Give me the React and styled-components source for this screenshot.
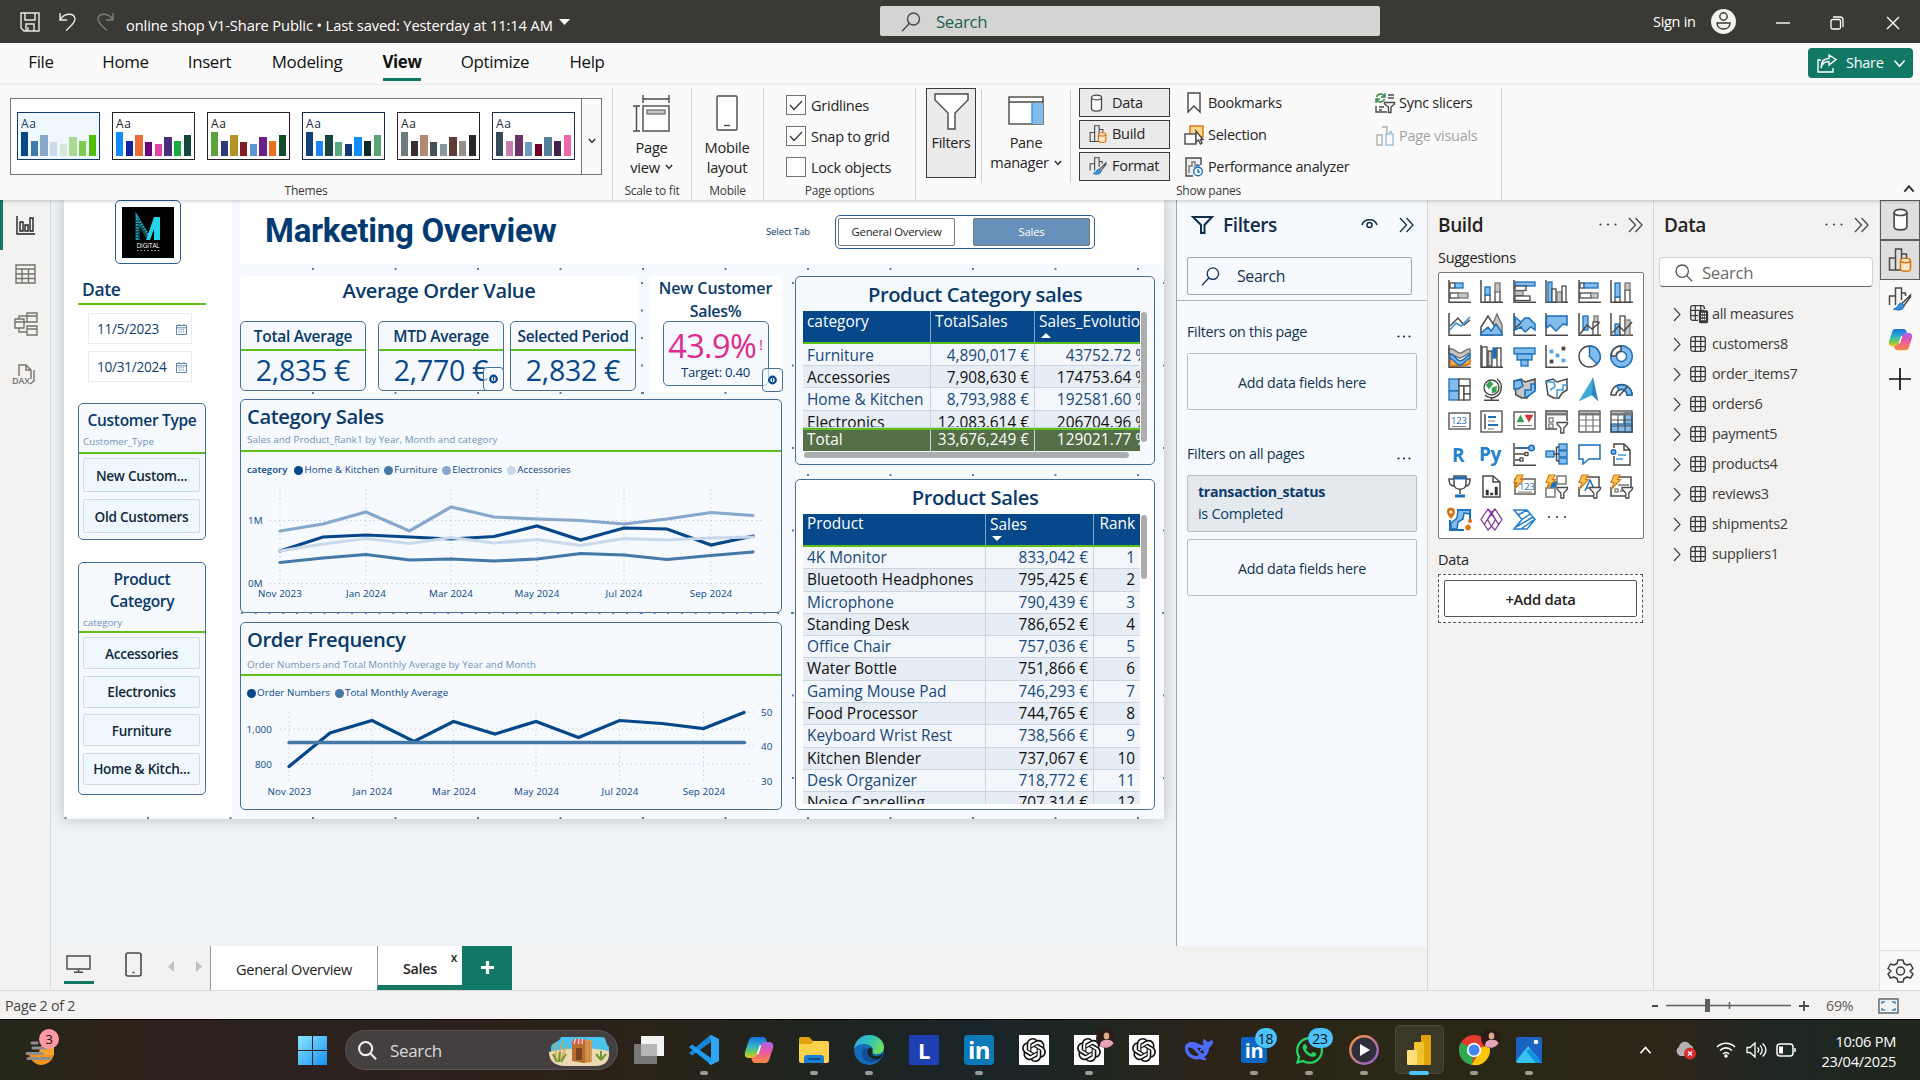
import React from 'react';
import styled, { createGlobalStyle, css } from 'styled-components';
import { SiOpenai } from 'react-icons/si';
import { FaWhatsapp } from 'react-icons/fa';

const Global = createGlobalStyle`
  *, *::before, *::after { box-sizing: border-box; letter-spacing: -0.02em; }
  body { margin: 0; overflow: hidden; font-family: "Open Sans", "Noto Sans", "Liberation Sans", sans-serif; color: #252423; }
  svg { display: block; flex: none; overflow: visible; }
`;

const NAVY = '#093a69';
const BLUE = '#07488a';
const GREEN = '#5cbf1c';
const TEAL = '#117865';
const K = '#4a4948';

const row = css`display: flex; align-items: center;`;
const col = css`display: flex; flex-direction: column;`;

const Screen = styled.div`${col} width: 1920px; height: 1080px; overflow: hidden; background: #f3f2f1;`;

const T = styled.span`
  display: block; white-space: nowrap; flex: none;
  font-size: ${p => p.$s}px; line-height: ${p => p.$lh || 20}px;
  font-weight: ${p => p.$w || 400}; color: ${p => p.$c || 'inherit'};
  ${p => p.$ls !== undefined && `letter-spacing: ${p.$ls}em;`}
`;
const Small = styled(T)`letter-spacing: 0.005em;`;
const Cell = styled.span`display: block; white-space: nowrap; font-size: 15.4px; line-height: ${p => p.$lh || 20}px; letter-spacing: 0;`;

/* ---------- title bar ---------- */
const TitleBar = styled.header`display: grid; grid-template-columns: 880px 500px 1fr; height: 43px; flex: none; background: #3b3936; color: #fff;`;
const TitleLeft = styled.div`${row} padding: 0 0 0 20px;`;
const IconSlot = styled.div`width: ${p => p.$w}px; flex: none; margin-top: ${p => p.$t || 0}px;`;
const DocName = styled.div`width: 433px; flex: none; padding-top: 6px;`;
const TopSearch = styled.div`${row} margin: 6px 0 7px; height: 30px; background: #d4d4d2; border-radius: 2px; padding: 2px 0 0 21px; gap: 15px; color: #215f4f;`;
const TitleRight = styled.div`${row} padding-left: 273px;`;

const MenuRow = styled.nav`display: flex; height: 42px; flex: none; background: #fafafa; padding: 0 7px 0 28px; justify-content: space-between;`;
const Menu = styled.div`display: flex; gap: 39px;`;
const MenuItem = styled.div`
  ${row} justify-content: center; width: ${p => p.$w}px; height: 38px; margin-right: ${p => p.$mr || 0}px; padding-top: 3px;
  border-bottom: 3px solid ${p => (p.$on ? TEAL : 'transparent')};
`;
const ShareBtn = styled.button`${row} width: 105px; height: 30px; margin-top: 5px; border: 0; border-radius: 4px; background: ${TEAL}; color: #fff; padding: 0 0 0 9px; font-family: inherit; gap: 9px;`;

/* ---------- ribbon ---------- */
const Ribbon = styled.section`display: flex; height: 115px; flex: none; background: #fafafa; position: relative; z-index: 3; box-shadow: 0 1px 4px rgba(0,0,0,.22);`;
const Group = styled.div`${col} width: ${p => p.$w}px; height: 112px; margin-top: 3px; align-items: center; border-right: 1px solid #d2d0ce;`;
const GroupBody = styled.div`height: 93px; width: 100%; flex: none; display: flex; ${p => p.$center && 'flex-direction: column; align-items: center; padding-right: 1px;'}`;
const GroupName = styled.div`font-size: 12px; line-height: 19px; white-space: nowrap; flex: none; color: #3b3a39;`;
const Gallery = styled.div`display: flex; margin: 10px 0 0 10px; width: 592px; height: 77px; border: 1px solid #777; background: #fff;`;
const Cards = styled.div`display: flex; gap: 12px; padding: 13px 0 0 6px; width: 571px;`;
const ThemeCard = styled.div`${col} width: 83px; height: 48px; border: 1px solid ${p => p.$c}; background: ${p => p.$bg || '#fff'}; padding: 2px 3px 4px;`;
const Bars = styled.div`display: flex; align-items: flex-end; gap: 2.3px; height: 24px;`;
const Bar = styled.i`width: 7.5px; background: ${p => p.$c}; height: ${p => p.$h}px;`;
const GalleryMore = styled.div`${row} justify-content: center; width: 20px; border-left: 1px solid #777; background: #fafafa; padding-top: 8px;`;
const Checks = styled.div`${col} gap: 11px; padding: 7px 0 0 22px;`;
const CheckRow = styled.div`${row} gap: 5px; height: 20px;`;
const Box = styled.div`${row} justify-content: center; width: 20px; height: 20px; border: 1px solid #767472; background: #fff;`;
const FiltersBtn = styled.div`${col} align-items: center; width: 50px; height: 90px; margin-left: 10px; padding-top: 4px; border: 1px solid #3a3a3a; background: #ebebeb; gap: 4px;`;
const Sep = styled.div`width: 1px; height: 93px; margin: 2px 0 0 ${p => p.$ml}px; background: #d2d0ce;`;
const PaneMgr = styled.div`${col} align-items: center; width: 88px; padding-top: 8px;`;
const PaneText = styled.div`${col} align-items: center; padding-top: 1px;`;
const Toggles = styled.div`${col} gap: 2.5px; margin-left: 8px; width: 91px;`;
const Toggle = styled.div`${row} height: 30px; border: 1px solid #3a3a3a; background: #ebebeb; padding-left: 9px; gap: 5px;`;
const Links = styled.div`${col} gap: 3px; margin-left: ${p => p.$ml}px; width: ${p => p.$w}px;`;
const LinkRow = styled.div`${row} height: 30px; gap: 4px; opacity: ${p => (p.$off ? 0.42 : 1)};`;
const RibbonEnd = styled.div`flex: 1; display: flex; align-items: flex-end; justify-content: flex-end; padding: 0 5px 7px 0;`;

/* ---------- workspace ---------- */
const Work = styled.main`display: flex; height: 790px; flex: none;`;
const Rail = styled.aside`${col} width: 51px; flex: none; border-right: 1px solid #dcdad8; background: #f3f2f1;`;
const RailItem = styled.div`${row} height: ${p => p.$h}px; padding-left: ${p => p.$pl}px; border-left: 3px solid ${p => (p.$on ? TEAL : 'transparent')};`;
const Middle = styled.div`${col} width: 1376px; flex: none;`;
const Upper = styled.div`display: flex; height: 746px;`;
const Canvas = styled.div`width: 1125px; background: #eff3f6; padding-left: 13px; overflow: hidden;`;

const dot = 'linear-gradient(#6d879f, #6d879f)';
const ReportPage = styled.div`
  display: flex; width: 1100px; height: 619px; box-shadow: 0 0 14px rgba(0,0,0,.22);
  background-color: #f6f9fe;
  background-image: ${Array.from({ length: 14 }, () => dot).join(', ')};
  background-image: radial-gradient(circle at 1px 1px, #5f7d97 .9px, transparent 1.1px), radial-gradient(circle at 1px 1px, #5f7d97 .9px, transparent 1.1px),
    radial-gradient(circle at 1px 1px, #5f7d97 .9px, transparent 1.1px), radial-gradient(circle at 1px 1px, #5f7d97 .9px, transparent 1.1px),
    radial-gradient(circle at 1px 1px, #5f7d97 .9px, transparent 1.1px), radial-gradient(circle at 1px 1px, #5f7d97 .9px, transparent 1.1px),
    radial-gradient(circle at 1px 1px, #5f7d97 .9px, transparent 1.1px), radial-gradient(circle at 1px 1px, #5f7d97 .9px, transparent 1.1px);
  background-size: 82.5px 2px, 82.5px 2px, 82.5px 2px, 13.75px 2px, 82.5px 2px, 2px 27.5px, 2px 82.5px, 2px 82.5px;
  background-position: 83px 68px, 83px 192px, 83px 274px, 177px 412px, 83px 617px, 577px 82px, 728px 82px, 1099px 82px;
  background-repeat: repeat-x, repeat-x, repeat-x, repeat-x, repeat-x, repeat-y, repeat-y, repeat-y;
`;
const SideCol = styled.div`${col} width: 168px; height: 617px; background: #fff; padding-left: 14px; flex: none;`;
const Logo = styled.div`width: 66px; height: 64px; margin-left: 37px; border: 1px solid #2b5f96; border-radius: 5px; padding: 6px; background: #fff;`;
const SliceTitle = styled.div`height: 41px; width: 128px; padding: 14px 0 0 4px; border-bottom: 2px solid ${GREEN};`;
const DateBox = styled.div`${row} justify-content: space-between; width: 104px; height: 31px; margin: ${p => p.$mt}px 0 0 10px; border: 1px solid #ebebeb; padding: 1px 4px 0 8px;`;
const Panel = styled.section`
  ${col} width: ${p => p.$w}px; height: ${p => p.$h}px; margin-top: ${p => p.$mt || 0}px; flex: none;
  border: 1px solid #46719f; border-radius: 5px; background: ${p => p.$bg || '#f6f9fe'}; overflow: hidden;
`;
const PanelHead = styled.div`${col} height: ${p => p.$h}px; flex: none; border-bottom: 2px solid ${GREEN}; padding: ${p => p.$p}; align-items: ${p => (p.$center ? 'center' : 'flex-start')};`;
const Sub = styled.div`align-self: flex-start; margin: ${p => p.$m};`;
const Choices = styled.div`${col} gap: ${p => p.$gap}px; padding: ${p => p.$pt}px 6px 0 4px;`;
const Choice = styled.div`${row} justify-content: center; height: ${p => p.$h}px; width: 117px; border: 1px solid #d3dade; border-radius: 2px; background: #f0f8ff; color: #12283a; padding-top: 1px;`;

const Board = styled.div`${col} width: 924px; margin-left: 8px;`;
const Header = styled.div`display: flex; height: 64px; background: #fff; border-radius: 0 0 5px 5px; padding-left: 25px;`;
const TitleText = styled.h1`margin: 0; font-family: Roboto, sans-serif; font-weight: 700; font-size: 33px; line-height: 40px; color: #003a70; white-space: nowrap; letter-spacing: -0.008em;`;
const TabBox = styled.div`display: flex; justify-content: space-between; width: 260px; height: 34px; margin: 15px 0 0 28px; border: 1px solid #2b5f96; border-radius: 5px; padding: 2px 4px 2px 2px;`;
const TabBtn = styled.div`${row} justify-content: center; width: 117px; border: 1px solid #777; border-radius: 2px; background: ${p => (p.$on ? '#6790ba' : '#fff')}; color: ${p => (p.$on ? '#fff' : '#252423')};`;
const BoardCols = styled.div`display: flex; gap: 13px; margin-top: 12px;`;
const LeftCol = styled.div`${col} width: 542px;`;
const KpiRow = styled.div`display: flex; gap: 11px; height: 116px;`;
const KpiArea = styled.div`${col} width: ${p => p.$w}px; background: #fff; align-items: center; border-radius: 4px;`;
const KpiCards = styled.div`display: flex; width: 398px; margin-top: 16px;`;
const KpiCard = styled.div`
  ${col} position: relative; align-items: center; width: 126px; height: 70px; margin-right: ${p => p.$mr || 0}px; flex: none;
  border: 1px solid #46719f; border-radius: 5px; background: #f6f9fe;
`;
const KpiName = styled.div`${row} justify-content: center; width: 100%; height: 29px; border-bottom: 2px solid ${GREEN};`;
const NewCard = styled.div`${col} position: relative; align-items: center; width: 106px; height: 65px; border: 1px solid #46719f; border-radius: 5px; background: #f6f9fe;`;
const NewValue = styled.div`display: flex; gap: 3px; padding-top: 5px;`;
const TargetText = styled.span`font-size: 13.2px; line-height: 14px; color: ${NAVY}; white-space: nowrap;`;
const Badge = styled.div`${row} justify-content: center; position: absolute; right: ${p => p.$r}px; bottom: ${p => p.$b}px; width: 21px; height: 24px; border: 1px solid #46719f; border-radius: 4px; background: rgba(246,249,254,.6);`;
const Legend = styled.div`${row} height: 20px; margin: ${p => p.$mt}px 0 0 6px; color: ${BLUE};`;
const Dot = styled.i`width: 9px; height: 9px; border-radius: 50%; background: ${p => p.$c}; margin: 0 1px 0 ${p => p.$ml || 0}px; flex: none;`;

const RightCol = styled.div`${col} width: 360px;`;
const PanelTitle = styled.div`${row} justify-content: center; height: 34px; flex: none;`;
const TableWrap = styled.div`display: flex; gap: 1px; padding-left: 7px; overflow: hidden; height: ${p => p.$h}px; flex: none;`;
const Table = styled.div`width: 337px; overflow: hidden; flex: none;`;
const Tr = styled.div`
  display: grid; grid-template-columns: ${p => p.$cols}; height: ${p => p.$h || 22.3}px; overflow: hidden;
  color: ${p => (p.$alt ? '#111' : '#17497c')}; background: ${p => (p.$alt ? '#e6edf4' : '#f3f6fa')};
  border-bottom: 1px solid #c9d5e0;
  ${p => p.$kind === 'head' && `background: ${BLUE}; color: #fff; border-bottom: 2px solid ${GREEN};`}
  ${p => p.$kind === 'total' && `background: #556e47; color: #fff; border: 0; border-top: 2px solid ${GREEN};`}
`;
const Td = styled.div`
  display: flex; flex-direction: column; overflow: hidden; padding: ${p => p.$pt || 0}px 5px 0 4px; align-items: ${p => (p.$right ? 'flex-end' : 'flex-start')};
  border-right: 1px solid ${p => (p.$head ? '#7fa3c6' : '#c9d5e0')};
  &:last-child { border-right: 0; }
`;
const SortMark = styled.i`margin: 1px 0 0 2px; border: 5px solid transparent; ${p => (p.$up ? 'border-bottom-color: #fff; border-top: 0;' : 'border-top-color: #fff; border-bottom: 0;')}`;
const VScroll = styled.i`width: 6px; height: ${p => p.$h}px; border-radius: 3px; background: #adadad; margin-top: 1px;`;
const HScroll = styled.i`width: 325px; height: 6px; border-radius: 3px; background: #adadad; margin: 1px 0 0 8px; flex: none;`;

/* ---------- filters pane ---------- */
const Filters = styled.aside`${col} width: 251px; background: #f6f9fe; border-left: 1px solid #a5a5a5; color: #12344f;`;
const FHead = styled.div`${row} height: 49px; padding-left: 15px; color: #102f4c;`;
const FSearch = styled.div`${row} width: 225px; height: 38px; margin: 8px 0 0 10px; border: 1px solid #a6a6a6; border-radius: 2px; padding-left: 13px; gap: 17px;`;
const FLine = styled.div`height: 1px; background: #b0b0b0; margin-top: 5px;`;
const FLabel = styled.div`display: flex; justify-content: space-between; padding: 0 16px 0 10px; margin-top: ${p => p.$mt}px;`;
const FBox = styled.div`${row} justify-content: center; width: 230px; height: 57px; margin: ${p => p.$mt}px 0 0 10px; border: 1px solid #bcbfc2; border-radius: 2px; padding-top: 2px;`;
const FCard = styled.div`${col} width: 230px; height: 57px; margin: 11px 0 0 10px; border: 1px solid #bcbfc2; border-radius: 2px; background: #e5e8ec; padding: 6px 0 0 10px; gap: 2px; color: #0a3d6d;`;

/* ---------- build and data panes ---------- */
const Pane = styled.aside`${col} width: 226px; flex: none; border-left: 1px solid #d8d6d4; background: #f3f2f1;`;
const PHead = styled.div`${row} height: 49px; padding: 0 10px; gap: 11px;`;
const Grow = styled.div`flex: 1;`;
const PLabel = styled.div`padding-left: 10px; margin-top: ${p => p.$mt}px;`;
const VizBox = styled.div`
  display: grid; grid-template-columns: repeat(6, 32.45px); grid-auto-rows: 32.5px; align-content: start; width: 206px; height: 267px; margin: 4px 0 0 10px;
  padding: 7px 0 0 9px; border: 1px solid #7a7876; border-radius: 2px; background: #fff;
`;
const DropZone = styled.div`width: 205px; height: 49px; margin: 4px 0 0 10px; padding: 5px; border: 1px dashed #555;  background: #fff;`;
const AddData = styled.div`${row} justify-content: center; height: 37px; border: 1px solid #555; border-radius: 2px;`;
const DSearch = styled.div`${row} width: 214px; height: 30px; margin: 8px 0 12px 5px; padding: 2px 0 0 15px; gap: 9px; border: 1px solid #d1d1d1; border-bottom-color: #616161; border-radius: 4px; background: #fff; color: #6b6a69;`;
const DRow = styled.div`${row} height: 30px; padding-left: 19px;`;
const Strip = styled.aside`${col} width: 41px; background: #faf9f8; border-left: 1px solid #e1dfdd; justify-content: space-between; flex: none;`;
const StripTop = styled.div`${col}`;
const StripBtn = styled.div`${row} justify-content: center; height: 39.8px; ${p => p.$on && 'border: 1px solid #605e5c; background: #e1dfdd;'}`;
const StripGear = styled.div`${row} justify-content: center; height: 40px; border-top: 1px solid #e1dfdd;`;

/* ---------- page tabs, status ---------- */
const PageTabs = styled.div`display: flex; height: 44px;`;
const ViewModes = styled.div`display: flex; width: 159px; padding-left: 13px;`;
const ModeOn = styled.div`${col} align-items: center; width: 30px; height: 38px; border-bottom: 3px solid ${TEAL}; padding: 9px 2px 0 0;`;
const ModeOff = styled.div`width: 17px; margin: 6px 26px 0 31px;`;
const Arrows = styled.div`display: flex; gap: 22px; padding-top: 15px;`;
const PTab = styled.div`display: flex; justify-content: center; width: ${p => p.$w}px; padding-top: 13px; background: #fff; border-left: 1px solid #999; border-bottom: ${p => (p.$on ? `5px solid ${TEAL}` : 0)}; position: relative;`;
const CloseX = styled.span`position: absolute; right: 5px; top: 3px; font-size: 12px; font-weight: 600; line-height: 18px;`;
const AddPage = styled.div`${row} justify-content: center; width: 50px; background: ${TEAL}; padding-bottom: 2px;`;
const Status = styled.footer`${row} height: 29px; flex: none; border-top: 1px solid #dcdad8; padding: 2px 21px 0 5px; color: #484644;`;
const ZoomBar = styled.div`${row} gap: 8px; color: #605e5c; padding-bottom: 1px;`;
const Percent = styled.div`width: 53px; padding-left: 9px; flex: none;`;

/* ---------- taskbar ---------- */
const Taskbar = styled.footer`
  display: flex; height: 61px; flex: none; border-top: 1px solid #000; color: #fff;
  background: linear-gradient(90deg, #24281b 0, #2f221a 6%, #2b211f 14%, #2c2119 26%, #292318 34%, #1e2420 43%, #1a2529 51%, #1e2623 56%, #2c2318 63%, #2a2716 70%, #2a2716 80%, #2e2519 87%, #1d2724 93%, #20261b 100%);
`;
const Weather = styled.div`width: 298px; padding: 9px 0 0 26px;`;
const Start = styled.div`width: 47px; padding-top: 16px;`;
const TSearch = styled.div`${row} width: 273px; height: 40px; margin: 10px 3.5px 0 0; padding: 1px 7px 0 12px; gap: 13px; border: 1px solid #5c5450; border-radius: 20px; background: #454040; color: #dadada;`;
const Slot = styled.div`${col} align-items: center; position: relative; width: 55px; height: 60px; padding-top: 15px;`;
const Active = styled.div`position: absolute; left: 3px; top: 5px; width: 49px; height: 49px; border: 1px solid #4b4836; border-radius: 5px; background: #3b3827; z-index: 0;`;
const Front = styled.div`position: relative;`;
const Ind = styled.i`position: absolute; bottom: 5px; height: 4px; border-radius: 2px; width: ${p => (p.$on ? 20 : 8)}px; background: ${p => (p.$on ? '#4cc2ff' : '#9d9b95')};`;
const Count = styled.span`${row} justify-content: center; position: absolute; top: 8px; left: ${p => p.$l}px; width: ${p => p.$w}px; height: 20px; border-radius: 10px; background: #4cc2ff; color: #111; font-size: 14px;`;
const AvatarSpot = styled.div`position: absolute; top: 9px; left: 34px;`;
const WhiteTile = styled.div`${row} justify-content: center; width: 30px; height: 30px; background: #fff; color: #111;`;
const LetterTile = styled.div`${row} justify-content: center; width: 30px; height: 30px; background: ${p => p.$bg}; border-radius: ${p => p.$r || 0}px; color: #fff;`;
const LetterSmall = styled.div`${row} justify-content: center; width: 26px; height: 26px; background: #0a66c2; border-radius: 2px; color: #fff; font-size: 20px; font-weight: 700;`;
const Tray = styled.div`${row} flex: 1; justify-content: flex-end; padding-right: 24px;`;
const Clock = styled.div`${col} align-items: flex-end; margin-left: 26px; width: 74px; padding-top: 1px;`;

/* ---------- svg helpers ---------- */
const S = ({ w = 23, h = 23, vb, s = K, sw = 1.4, f = 'none', children }) => (
  <svg width={w} height={h} viewBox={vb || `0 0 ${w} ${h}`} stroke={s} strokeWidth={sw} fill={f}>{children}</svg>
);
const B = '#1a6fb8';
const BF = '#83bbec';
const GF = '#c8c6c4';
const GS = '#7a7876';
const R = (x, y, w, h, s = K, f = '#fff', sw = 1.3) => <rect key={`${x}-${y}-${w}`} x={x} y={y} width={w} height={h} stroke={s} fill={f} strokeWidth={sw} />;
const Axis = () => <path d="M1 0V22.3H23" strokeWidth="1.5" />;
const P = (d, s = K, f = 'none', sw = 1.5) => <path key={d} d={d} stroke={s} fill={f} strokeWidth={sw} />;
const Bolt = () => <path d="M4 0H10L7.5 4.5H10.5L1.5 14L4 7.5H1Z" fill="#ffc35a" stroke="#d87a10" strokeWidth="1.2" />;
const Funnel = () => <path d="M12 12.5H22.5V14L18.8 18V23H15.8V18L12 14Z" fill="#fff" stroke={K} strokeWidth="1.3" />;
const Num = ({ x, y, s }) => <text x={x} y={y} fontSize={s} fill={B} stroke="none" letterSpacing="0">123</text>;

const viz = [
  <><Axis />{R(2, 3, 5, 5)}{R(7, 3, 8, 5, B, BF)}{R(2, 13, 9, 5)}{R(10, 13, 10, 5, GS, GF)}</>,
  <><Axis />{R(5, 15, 5, 7)}{R(5, 7, 5, 8, B, BF)}{R(15, 11, 5, 11)}{R(15, 3, 5, 9, GS, GF)}</>,
  <><Axis />{R(2, 2, 20, 4, B, BF)}{R(2, 6, 11, 4.5)}{R(2, 11, 8, 4.5, GS, GF)}{R(2, 16, 15, 4.5)}</>,
  <><Axis />{R(3, 2, 4, 20, B, BF)}{R(7, 9, 4, 13)}{R(12, 12, 5, 10, GS, GF)}{R(17, 6, 4, 16)}</>,
  <><Axis />{R(2, 3, 4, 5)}{R(6, 3, 14, 5, B, BF)}{R(2, 13, 11, 5)}{R(13, 13, 7, 5, GS, GF)}</>,
  <><Axis />{R(5, 17, 5, 5)}{R(5, 3, 5, 14, B, BF)}{R(15, 10, 5, 12)}{R(15, 3, 5, 7, GS, GF)}</>,
  <><Axis />{P('M2 13L10 5L16 12L22 7')}{P('M2 17L8 10L13 13L22 4', '#2f95dc')}</>,
  <>{P('M8 22L17 1L22 12V22Z', GS, GF)}{P('M1 14L8 3L16 15L12 22H1Z', K, '#fff')}{P('M1 22V20L8 14L11 18L16 11L22 20V22Z', B, BF)}</>,
  <><Axis />{P('M2 4L8 9L12 5H16L22 11V17L18 14L12 19L8 14L2 17Z', B, BF)}{P('M2 15L8 10')}</>,
  <><Axis />{P('M1.5 3H22V12L18 11L11 18L5 12L1.5 15Z', B, BF)}</>,
  <><Axis />{R(5, 3, 5, 14, B, BF)}{R(16, 3, 4, 6, GS, GF)}{R(15, 9, 5, 13)}{P('M2 21L9 12L14 16L22 9')}</>,
  <><Axis />{R(5, 11, 5, 11, B, BF)}{R(10, 3, 5, 19)}{R(15, 7, 5, 15, GS, GF)}{P('M2 20L9 13L14 18L22 9')}</>,
  <>{P('M2 20V14C8 12 8 16 12 16S17 11 22 12V19C18 21 8 21 2 21', '#d8720c', '#f7a94e')}{P('M1 4C6 2 8 8 12 8S18 3 22 4V8C18 8 16 13 12 13S5 8 1 9Z', GS, GF)}{P('M2 9C7 9 8 16 12 16S18 11 22 9V13C18 14 16 20 12 20S6 14 2 13Z', B, BF)}<Axis /></>,
  <><Axis />{R(2, 2, 5, 20)}{R(8, 6, 4, 15, K, GF)}{R(13, 3, 3, 10, B, B)}{R(17, 3, 4, 19)}</>,
  <>{R(1, 3, 21, 6, B, BF)}{R(4, 9, 15, 6, B, BF)}{R(8, 15, 7, 6, B, BF)}</>,
  <><Axis />{[[5, 5, '#5ba6e0'], [17, 2, K], [11, 9, '#5ba6e0'], [17, 14, '#5ba6e0'], [5, 15, K]].map(([x, y, c]) => R(x, y, 3, 3, c, c, 0.8))}</>,
  <><circle cx="11.5" cy="11.5" r="10.5" fill="#fff" />{P('M11.5 11.5V1A10.5 10.5 0 0 1 19 19Z', B, BF)}</>,
  <><circle cx="11.5" cy="11.5" r="8" stroke={BF} strokeWidth="6" /><circle cx="11.5" cy="11.5" r="10.8" stroke={B} /><circle cx="11.5" cy="11.5" r="5" stroke={B} fill="#fff" />{P('M11 1A10.5 10.5 0 0 0 1 11H6A5 5 0 0 1 11 6Z', K, '#fff')}</>,
  <>{R(1, 1, 10, 12, B, BF)}{R(1, 13, 10, 9, B, BF)}{R(11, 1, 11, 7)}{R(11, 8, 5, 14)}{R(16, 8, 6, 8)}{R(16, 16, 6, 6)}</>,
  <><circle cx="11.5" cy="9.5" r="7.5" fill="#fff" />{P('M6 7L10 3L13 6L9 11ZM12 10L17 8L16 14L12 15Z', '#36a14b', '#36a14b', 0.5)}{P('M17 1A10.5 10.5 0 0 1 14 19.5C11 20.5 7 19 5 17')}{P('M11.5 20V22.3M4 22.3H19')}</>,
  <>{P('M1 3L8 1L12 4L22 1V12L17 15L14 20H9L3 17Z', K, GF)}{P('M1 3L8 2L10 8L5 11H1ZM12 12H18V6H22V13L14 19H12Z', B, BF)}</>,
  <>{P('M1 3L8 1L12 4L22 1V12L17 15L14 20H9L3 17Z', K, '#fff')}{P('M1 4H9L10 9L5 12M12 19V12H18V7H22', '#3a9be0')}</>,
  <>{P('M15 0L1 23L14 17Z', '#2f9ed0', '#3fa9d6', 0.3)}{P('M15 0L14 17L20 23Z', '#1672ae', '#2386bb', 0.3)}</>,
  <>{P('M1 17A10.5 10.5 0 0 1 22 17H17A5.5 5.5 0 0 0 6 17Z', K, '#fff')}{P('M7 8A10.5 10.5 0 0 1 22 17H17A5.5 5.5 0 0 0 9 12Z', B, BF)}{P('M9 18L17 9')}</>,
  <>{R(1, 3, 21, 16, K)}<Num x={3} y={14} s={9.5} />{P('M4 16.5H18', GS, 'none', 1)}</>,
  <>{R(1, 1, 21, 21)}{P('M5 4V19')}{P('M8 7H16M8 15H18', B, 'none', 2)}{P('M8 11H15M8 19H14', GS, 'none', 1)}</>,
  <>{R(1, 2, 21, 17)}{P('M4 12L7.5 5L11 12Z', '#3b9a55', '#3b9a55', 0.5)}{P('M12 5H20L16 12Z', '#d13438', '#d13438', 0.5)}{P('M4 15.5H19', GS, 'none', 1)}</>,
  <>{P('M12 19H1V1H22V11')}{P('M1 4H22', GS, 'none', 3)}{R(4, 8, 4, 4, GS)}{R(4, 14, 4, 4, GS)}<Funnel /></>,
  <>{R(1, 1, 21, 21)}{P('M1 4H22', GS, 'none', 3)}{P('M1 10H22M1 16H22M8 5V22M15 5V22', GS, 'none', 1.2)}</>,
  <>{R(14, 3, 8, 19, B, BF)}{R(1, 14, 21, 8, B, BF)}{R(1, 1, 21, 21, K, 'none')}{P('M1 4H22', GS, 'none', 3)}{P('M1 10H22M1 16H22M8 5V22M15 5V22', K, 'none', 1)}</>,
  <text x="4" y="18.5" fontSize="19" fontWeight="700" fill="#2283cc" stroke="none">R</text>,
  <text x="-1" y="17.5" fontSize="19" fontWeight="700" fill="#2283cc" stroke="none">Py</text>,
  <><Axis />{P('M2 5H15M2 11H12M2 17H7')}{P('M4 5H17', B)}<circle cx="18.5" cy="5" r="2.8" fill={BF} stroke={B} />{R(12, 9.5, 3, 3)}{R(7, 15, 3, 3)}</>,
  <>{R(1, 8, 8, 6, B, BF)}{R(14, 1, 8, 6, B, BF)}{R(14, 8, 8, 6, B, BF)}{R(14, 15, 8, 6, B, BF)}{P('M9 11H14M11.5 4V18M11.5 4H14M11.5 18H14')}</>,
  <>{P('M1 2H22V16H11L5 21V16H1Z', B, '#fff')}</>,
  <>{P('M4 5V1H14L20 7V22H4V13', K)}{P('M14 1V7H20')}<circle cx="3.5" cy="9" r="2.3" fill={BF} stroke={B} />{P('M8 12H16M6 16H13', '#3a9be0')}</>,
  <>{P('M6 1H18V9C18 16 6 16 6 9ZM6 4H1C1 9 3 11 6 11M18 4H22C22 9 21 11 18 11M12 14V19')}{P('M6 3H18M7 21H17', B, 'none', 3)}</>,
  <>{P('M3 1H13L20 7V22H3Z')}{P('M13 1V7H20')}{[[6, 15, 5], [10.5, 18, 2], [15, 12, 8]].map(([x, y, h]) => R(x, y, 2.4, h, '#333', '#333', 0.5))}</>,
  <>{R(2, 4, 20, 15)}<Num x={6} y={15} s={9.5} />{P('M5 17H19', GS, 'none', 1)}<Bolt /></>,
  <>{P('M12 1H21V9H12Z', GS)}{P('M1 13H10V22H1Z', GS)}{R(6, 7, 5, 5, B, B)}<Funnel /><Bolt /></>,
  <>{P('M8 2H21V12M1 12V21H15')}{P('M7 16L12 5L16 14M9 13H14', B)}<Funnel /><Bolt /></>,
  <>{P('M8 2H21V12M1 12V21H15')}{P('M8 10H19M10 16H13', GS)}{R(5, 14, 3, 3, GS)}<Funnel /><Bolt /></>,
  <>{P('M9 2H22V13M2 12V22H16', B, 'none', 2)}{P('M9 21L10 14L15 11L16 5L22 6V2H10L9 10L3 15V21Z', B, BF)}<path d="M-1 3.5A4 4 0 0 1 7 3.5C7 7 3 11 3 11S-1 7 -1 3.5Z" fill="#d8720c" stroke="none" /><circle cx="3" cy="4" r="1.5" fill="#fff" stroke="none" /><circle cx="20" cy="19.5" r="3.2" fill="#d8720c" stroke="#fff" strokeWidth=".8" /><circle cx="22" cy="13" r="2" fill="#d8720c" stroke="none" /></>,
  <>{P('M8 1L1 11.5L8 22L11.5 18.5L15 22L22 11.5L15 1L11.5 4.500ZM8 1L15.500 11.500L11.500 18.500M15 1L7.500 11.500L11.500 18.500M11.500 4.500L4.500 16.500M11.500 4.500L18.500 16.500', '#8a3a9e', 'none', 1.3)}</>,
  <>{P('M1 2H14L22 11.5L14 21H1L9 11.5ZM5 7L14 2M9 11.5L17 6M3 19L20 9M8 21L22 11', '#2080d0')}</>,
  <><circle cx="4" cy="9" r="1" fill="#333" stroke="none" /><circle cx="12" cy="9" r="1" fill="#333" stroke="none" /><circle cx="20" cy="9" r="1" fill="#333" stroke="none" /></>,
];

const Chevron = ({ w = 9, c = '#333', sw = 1.7, dir = 'down' }) => {
  const d = { down: 'M1 1L4.5 5L8 1', up: 'M1 5L4.5 1L8 5' }[dir];
  return <svg width={w} height={w * 0.67} viewBox="0 0 9 6" stroke={c} strokeWidth={sw} fill="none"><path d={d} /></svg>;
};
const DoubleChevron = ({ s = K }) => <S w={15} h={16} s={s} sw={1.3}><path d="M1 1L7.5 8L1 15M7.5 1L14 8L7.5 15" /></S>;
const Dots = ({ w = 18, c = '#444' }) => <svg width={w} height="3" viewBox={`0 0 ${w} 3`} fill={c}><circle cx="1.5" cy="1.5" r="1.1" /><circle cx={w / 2} cy="1.5" r="1.1" /><circle cx={w - 1.5} cy="1.5" r="1.1" /></svg>;
const Glass = ({ s = K, z = 20 }) => <svg width={z} height={z} viewBox="0 0 20 20" stroke={s} strokeWidth="1.4" fill="none"><circle cx="12.5" cy="7" r="6" /><path d="M8.2 11.6L1 19.3" /></svg>;
const GlassR = ({ s = K, z = 18, sw = 1.4 }) => <svg width={z} height={z} viewBox="0 0 18 18" stroke={s} strokeWidth={sw} fill="none"><circle cx="7.2" cy="7.2" r="6.2" /><path d="M11.6 11.6L17.2 17.2" /></svg>;
const Cyl = ({ w = 12, h = 18, s = K, f = '#fff', sw = 1.3 }) => <svg width={w} height={h} viewBox="0 0 12 18" stroke={s} strokeWidth={sw} fill={f}><path d="M1 3.5V14.5C1 18 11 18 11 14.5V3.5" /><ellipse cx="6" cy="3.5" rx="5" ry="2.4" /></svg>;
const BuildIcon = ({ z = 20 }) => <svg width={z} height={z} viewBox="0 0 23 24" stroke={K} strokeWidth="1.5" fill="#fff"><path d="M1 10H7V22H1ZM7 1H13V22H7ZM13 6H18V10" fill="none" /><path d="M12 13V21C12 24 22 24 22 21V13" fill="#fde7cf" stroke="#d8720c" /><ellipse cx="17" cy="12.5" rx="5" ry="2.2" fill="#fde7cf" stroke="#d8720c" /></svg>;
const FormatIcon = ({ z = 20 }) => <svg width={z} height={z} viewBox="0 0 23 24" stroke={K} strokeWidth="1.5" fill="none"><path d="M1 18V9H7V18M7 14V1H13V13M13 6H17V9" /><path d="M22 8L13 17L15 19L22 10Z" fill="#fff" /><path d="M13 16C9 16 10 21 5 22C10 24 16 23 15.5 18.5Z" fill="#3d8fd6" stroke={B} strokeWidth="1" /></svg>;
const Copilot = ({ z = 24, id }) => (
  <svg width={z} height={z * 0.93} viewBox="0 0 28 26">
    <defs>
      <linearGradient id={`${id}a`} x1="0" y1="0" x2="0" y2="1"><stop offset="0" stopColor="#1b6fe0" /><stop offset=".45" stopColor="#2fb5c8" /><stop offset=".75" stopColor="#7ccb4a" /><stop offset="1" stopColor="#f5c518" /></linearGradient>
      <linearGradient id={`${id}b`} x1="0" y1="0" x2="0" y2="1"><stop offset="0" stopColor="#a55ff0" /><stop offset=".5" stopColor="#ee5a9b" /><stop offset="1" stopColor="#fb8b3c" /></linearGradient>
    </defs>
    <path d="M8 0H18C20 0 21 2 21.5 4L22 6C19 5 17 6 16 9L13 17C12 20 10 21 7 21H4C0 21 -1 18 .3 14L3.6 4C4.4 1.5 5.6 0 8 0Z" fill={`url(#${id}a)`} />
    <path d="M20 26H10C8 26 7 24 6.5 22L6 20C9 21 11 20 12 17L15 9C16 6 18 5 21 5H24C28 5 29 8 27.7 12L24.4 22C23.6 24.5 22.4 26 20 26Z" fill={`url(#${id}b)`} />
    <path d="M15.500 8.500L12.500 17.500" stroke="#fff" strokeWidth="1.600" />
  </svg>
);
const Cal = () => <S w={11} h={11} s="#5c86ad" sw={1}><path d="M.5 1.5H10.5V10.5H.5ZM.5 3.8H10.5M3 0V2M8 0V2" /><path d="M2.5 5.8H8.5M2.5 8H8.5" strokeDasharray="1.2 1" /></S>;
const InfoMark = () => <svg width="9" height="10" viewBox="0 0 9 10"><circle cx="4.5" cy="5" r="3.3" fill="none" stroke={BLUE} strokeWidth="2.2" /><path d="M4.5 3V6.5" stroke={BLUE} strokeWidth="1.2" /></svg>;
const GridIcon = () => <S w={16} h={16} s="#3b3a39" sw={1.3}><rect x=".7" y=".7" width="14.6" height="14.6" rx="2.5" /><path d="M5.3 .7V15.3M10.7 .7V15.3M.7 5.3H15.3M.7 10.7H15.3" /></S>;
const MeasureIcon = () => <S w={18} h={18} s="#3b3a39" sw={1.3}><path d="M8 15.3H3C1.5 15.3 .7 14.5 .7 13V3C.7 1.5 1.5 .7 3 .7H12C14 .7 14.5 1.5 14.5 4M5.3 .7V15.3M10.7 .7V5M.7 5.3H14M.7 10.7H8" /><rect x="9.5" y="6" width="8" height="11.5" rx="1" fill="#3b3a39" /><path d="M11 8.5H16M11 11.5H16M11 14.5H16" stroke="#fff" strokeDasharray="1.3 .6" /></S>;
const Avatar = () => (
  <AvatarSpot>
    <svg width="19" height="19" viewBox="0 0 19 19">
      <circle cx="9.5" cy="9.5" r="9.5" fill="#2c1a16" />
      <path d="M4 16C5 11 8 11 10 11S16 10 17.500 14.500A9.500 9.500 0 0 1 4 17Z" fill="#e8a3b8" />
      <ellipse cx="10.5" cy="7" rx="2.800" ry="3.600" fill="#dba98b" />
    </svg>
  </AvatarSpot>
);

/* ---------- data ---------- */
const themeH = [24, 15, 21, 14, 12, 19, 15, 21];
const themes = [
  { c: '#0f3d6e', bg: '#f0f8ff', b: ['#054789', '#4478a9', '#87a7cb', '#c9d9eb', '#d5e8d4', '#a9db8e', '#7dcb4f', '#50be05'] },
  { c: '#222', b: ['#118dff', '#12239e', '#e66c37', '#6b007b', '#e044a7', '#4b2e7a', '#1aab40', '#15473f'] },
  { c: '#222', b: ['#5ba33c', '#2d3b78', '#b09424', '#7d1d27', '#5c96d2', '#6a1f8a', '#e8701f', '#16492c'] },
  { c: '#12294d', b: ['#123f75', '#1d83ff', '#1a4340', '#57a87a', '#0e3a76', '#118dff', '#0b2b28', '#57a474'] },
  { c: '#252423', b: ['#6b7c7e', '#3a2d2d', '#b08b72', '#465356', '#87989c', '#5e3c33', '#938e88', '#26292b'] },
  { c: '#22304a', b: ['#364a5a', '#c97fae', '#6b3268', '#6f9cbd', '#6c0029', '#557f99', '#43224a', '#ef68ae'] },
];
const catX = [280, 323, 366, 409.5, 451, 494, 537, 580.5, 624, 667, 711, 753];
const catSeries = [
  ['#87a7cb', [531, 524, 512, 531, 507, 517, 519, 520.5, 524, 519, 512.5, 515.5]],
  ['#4478a9', [562.5, 558, 554.5, 560, 559, 561, 559, 553.5, 555, 559.5, 555.5, 552]],
  ['#054789', [551, 537, 535, 537, 539, 536.5, 526, 540, 528, 529, 545, 536]],
  ['#c9d9eb', [551, 544, 538.5, 543.5, 537.5, 543, 539.5, 545.5, 538.5, 540, 538, 537]],
];
const ordX = [289, 330, 372, 414, 453.5, 495, 536, 578.5, 619.5, 662, 703.5, 744];
const ordY = [767, 733.5, 721, 742, 722, 734.5, 722, 738, 721, 724, 729, 713];
const monthLabels = ['Nov 2023', 'Jan 2024', 'Mar 2024', 'May 2024', 'Jul 2024', 'Sep 2024'];
const line = (xs, ys) => xs.map((x, i) => `${x},${ys[i]}`).join(' ');

const products = [
  ['4K Monitor', '833,042 €', 1], ['Bluetooth Headphones', '795,425 €', 2], ['Microphone', '790,439 €', 3], ['Standing Desk', '786,652 €', 4],
  ['Office Chair', '757,036 €', 5], ['Water Bottle', '751,866 €', 6], ['Gaming Mouse Pad', '746,293 €', 7], ['Food Processor', '744,765 €', 8],
  ['Keyboard Wrist Rest', '738,566 €', 9], ['Kitchen Blender', '737,067 €', 10], ['Desk Organizer', '718,772 €', 11], ['Noise Cancelling', '707,314 €', 12],
];
const categories = [['Furniture', '4,890,017 €', '43752.72 %'], ['Accessories', '7,908,630 €', '174753.64 %'], ['Home & Kitchen', '8,793,988 €', '192581.60 %'], ['Electronics', '12,083,614 €', '206704.96 %']];
const tables = ['all measures', 'customers8', 'order_items7', 'orders6', 'payment5', 'products4', 'reviews3', 'shipments2', 'suppliers1'];

const ChartSvg = styled.svg`font-size: 9.8px; fill: ${BLUE}; text { letter-spacing: 0.01em; }`;

const CategoryChart = () => (
  <ChartSvg width="540" height="132" viewBox="241 480 540 132">
    <g stroke="#b5c3d2" strokeWidth="1" strokeDasharray="1 3.5">
      <path d="M270 520.5H762M270 583.5H762" />
      {[0, 2, 4, 6, 8, 10].map(i => <path key={i} d={`M${catX[i]} 489V586`} />)}
    </g>
    {catSeries.map(([c, ys]) => <polyline key={c} points={line(catX, ys)} fill="none" stroke={c} strokeWidth="3.2" strokeLinecap="round" />)}
    <text x="248" y="524">1M</text><text x="248" y="587">0M</text>
    {monthLabels.map((m, i) => <text key={m} x={catX[i * 2]} y="597.2" textAnchor="middle">{m}</text>)}
  </ChartSvg>
);
const OrderChart = () => (
  <ChartSvg width="540" height="104" viewBox="241 704 540 104">
    <g stroke="#b5c3d2" strokeWidth="1" strokeDasharray="1 3.5">
      <path d="M280 730H749M280 765H749M748 713H755M748 747H755M748 782H755" />
      {[0, 2, 4, 6, 8, 10].map(i => <path key={i} d={`M${ordX[i]} 713V784`} />)}
    </g>
    <polyline points={line(ordX, ordY.map(y => y + 0.5))} fill="none" stroke="#054789" strokeWidth="3.2" strokeLinecap="round" />
    <path d="M289 743.5H744.5" stroke="#4478a9" strokeWidth="3.5" strokeLinecap="round" />
    <text x="272" y="733.5" textAnchor="end">1,000</text><text x="272" y="768.5" textAnchor="end">800</text>
    <text x="761" y="716.5">50</text><text x="761" y="750.5">40</text><text x="761" y="785.5">30</text>
    {monthLabels.map((m, i) => <text key={m} x={ordX[i * 2] + 0.5} y="795.5" textAnchor="middle">{m}</text>)}
  </ChartSvg>
);

const Top = () => (
  <>
    <TitleBar>
      <TitleLeft>
        <IconSlot $w={38}><S w={20} h={20} s="#e8e8e8"><path d="M1 1H19V19H4L1 16ZM5 1V8H15V1M6 19V12H14V19M8 19V15" /></S></IconSlot>
        <IconSlot $w={38}><S w={19} h={19} s="#e8e8e8"><path d="M2 1V8H9M2 8C6 1 16 0 17 7C17 11 13 14 8 18.5" /></S></IconSlot>
        <IconSlot $w={30}><S w={19} h={19} s="#7d7b79"><path d="M17 1V8H10M17 8C13 1 3 0 2 7C2 11 6 14 11 18.5" /></S></IconSlot>
        <DocName><T $s={14.7} $ls={-0.009}>online shop V1-Share Public • Last saved: Yesterday at 11:14 AM</T></DocName>
        <svg width="11" height="6" viewBox="0 0 11 6"><path d="M0 0H11L5.5 6Z" fill="#fff" /></svg>
      </TitleLeft>
      <TopSearch><Glass /><T $s={16.8} $lh={24}>Search</T></TopSearch>
      <TitleRight>
        <IconSlot $w={58}><T $s={14.5}>Sign in</T></IconSlot>
        <IconSlot $w={65}><S w={25} h={25} s="#3b3936"><circle cx="12.5" cy="12.5" r="12.5" fill="#f3f2f1" stroke="none" /><circle cx="12.5" cy="7.5" r="3.7" /><path d="M6 14H19C19 22 6 22 6 14Z" /></S></IconSlot>
        <IconSlot $w={54}><S w={14} h={14} s="#fff"><path d="M0 8H14" /></S></IconSlot>
        <IconSlot $w={56} $t={3}><S w={14} h={14} s="#fff" sw={1.3}><rect x="1" y="3.5" width="9.5" height="9.5" rx="1.5" /><path d="M3 1H10C12 1 13 2 13 4V11" /></S></IconSlot>
        <IconSlot $w={14} $t={3}><S w={14} h={14} s="#fff"><path d="M1 1L13 13M13 1L1 13" /></S></IconSlot>
      </TitleRight>
    </TitleBar>
    <MenuRow>
      <Menu>
        {[['File', 26, 9], ['Home', 47], ['Insert', 43], ['Modeling', 74], ['View', 38], ['Optimize', 70], ['Help', 36]].map(([n, w, mr]) => (
          <MenuItem key={n} $w={w} $mr={mr} $on={n === 'View'}><T $s={16.9} $w={n === 'View' ? 700 : 400} $c="#111">{n}</T></MenuItem>
        ))}
      </Menu>
      <ShareBtn>
        <S w={20} h={19} s="#fff"><path d="M4 6H1V18H16V14M4 14C5 9 8 7.5 12 7.5V11L19 5.5L12 1V4.5C7 4.5 4 8 4 14Z" /></S>
        <T $s={14.5}>Share</T><Chevron w={13} c="#fff" sw={1.1} />
      </ShareBtn>
    </MenuRow>
  </>
);

const RibbonBar = () => (
  <Ribbon>
    <Group $w={613}>
      <GroupBody>
        <Gallery>
          <Cards>
            {themes.map(t => (
              <ThemeCard key={t.b[1]} $c={t.c} $bg={t.bg}>
                <T $s={12} $lh={17} $c={t.c} $ls={0.05}>Aa</T>
                <Bars>{t.b.map((c, i) => <Bar key={i} $c={c} $h={themeH[i]} />)}</Bars>
              </ThemeCard>
            ))}
          </Cards>
          <GalleryMore><Chevron w={8} /></GalleryMore>
        </Gallery>
      </GroupBody>
      <GroupName>Themes</GroupName>
    </Group>
    <Group $w={79}>
      <GroupBody $center>
        <IconSlot $w={37} $t={7}><S w={37} h={42}><path d="M10 0V8M36 0V8M10 4H36M0 11H7M0 36H7M3.5 11V36" /><rect x="10" y="11" width="26" height="25" fill="#fff" /><rect x="14" y="15" width="18" height="4" stroke={GS} fill={GF} /></S></IconSlot>
        <T $s={14.7}>Page</T>
        <CheckRow><T $s={14.7}>view</T><Chevron w={8} /></CheckRow>
      </GroupBody>
      <GroupName>Scale to fit</GroupName>
    </Group>
    <Group $w={72}>
      <GroupBody $center>
        <IconSlot $w={22} $t={7}><S w={22} h={42}><rect x="1" y="1" width="20" height="34" rx="1" fill="#fff" /><path d="M8 30.5H14" /></S></IconSlot>
        <T $s={14.7}>Mobile</T><T $s={14.7}>layout</T>
      </GroupBody>
      <GroupName>Mobile</GroupName>
    </Group>
    <Group $w={152}>
      <GroupBody>
        <Checks>
          {[['Gridlines', 1], ['Snap to grid', 1], ['Lock objects', 0]].map(([n, on]) => (
            <CheckRow key={n}><Box>{on ? <S w={14} h={11} s="#333" sw={1.2}><path d="M1 5L5 9.5L13 1" /></S> : null}</Box><T $s={14.6} $lh={22}>{n}</T></CheckRow>
          ))}
        </Checks>
      </GroupBody>
      <GroupName>Page options</GroupName>
    </Group>
    <Group $w={586}>
      <GroupBody>
        <FiltersBtn><S w={35} h={37}><path d="M1 1H34V7L21 20V36H14V20L1 7Z" fill="#fff" /></S><T $s={14.5} $lh={18}>Filters</T></FiltersBtn>
        <Sep $ml={5} />
        <PaneMgr>
          <S w={36} h={36}><rect x="1" y="1" width="34" height="27" fill="#fff" /><rect x="24" y="7" width="11" height="21" fill={BF} stroke="none" /><path d="M24 7V28" stroke="#3a96dd" /><path d="M1 6H35" /></S>
          <PaneText><T $s={14.5}>Pane</T><CheckRow><T $s={14.5}>manager</T><Chevron w={8} /></CheckRow></PaneText>
        </PaneMgr>
        <Sep $ml={0} />
        <Toggles>
          <Toggle><IconSlot $w={18}><Cyl w={15} h={18} /></IconSlot><T $s={14.5}>Data</T></Toggle>
          <Toggle><BuildIcon z={18} /><T $s={14.5}>Build</T></Toggle>
          <Toggle><FormatIcon z={18} /><T $s={14.5}>Format</T></Toggle>
        </Toggles>
        <Links $ml={15} $w={190}>
          <LinkRow><IconSlot $w={19}><S w={17} h={21}><path d="M3 1H15V20L9 14L3 20Z" /></S></IconSlot><T $s={14.5}>Bookmarks</T></LinkRow>
          <LinkRow><IconSlot $w={19}><S w={19} h={20}><rect x="5" y="1" width="13" height="11" fill="#ffd88a" stroke="#d8720c" /><rect x="0" y="9" width="11" height="10" fill="#fff" /><path d="M11 6V17L13.5 15L15.5 19L17 18L15.5 14.5H18Z" fill="#fff" /></S></IconSlot><T $s={14.5} $lh={22}>Selection</T></LinkRow>
          <LinkRow><IconSlot $w={19}><S w={18} h={20}><path d="M8 19H1V1H16V8" fill="#eee" /><path d="M4 16V9H7V5H10V11M12 9V7" stroke={GS} /><circle cx="13" cy="14.5" r="4.3" fill="#fff" stroke={B} /><path d="M13 12V15H15M11 8.5H15" stroke={B} /></S></IconSlot><T $s={14.4}>Performance analyzer</T></LinkRow>
        </Links>
        <Links $ml={0} $w={110}>
          <LinkRow><IconSlot $w={20}><S w={20} h={20}><path d="M1 13V19H12M4 14H9M4 17H7M13 2H19M13 5H19" /><path d="M9.5 9.5H19.5V11L16 14V19.5H13.5V14L9.5 11Z" fill="#fff" /><path d="M1.5 4C3 0 8 0 9.5 3.5M10 0V4H6M9.5 6C8 10 3 10 1.5 6.5M1 10V6H5" stroke="#2f8a42" /></S></IconSlot><T $s={14.5}>Sync slicers</T></LinkRow>
          <LinkRow $off><IconSlot $w={20}><S w={20} h={20}><path d="M2 9H7V19H2ZM7 1H12V8M7 9V19M14 6H17" /><rect x="11" y="8" width="7" height="11" stroke={B} /></S></IconSlot><T $s={14.5}>Page visuals</T></LinkRow>
        </Links>
      </GroupBody>
      <GroupName>Show panes</GroupName>
    </Group>
    <RibbonEnd><Chevron w={12} dir="up" sw={1.5} /></RibbonEnd>
  </Ribbon>
);

const SideSlicers = () => (
  <SideCol>
    <Logo>
      <svg width="52" height="51" viewBox="0 0 52 51">
        <rect width="52" height="51" fill="#000" />
        <path d="M15 33V10L26 28" fill="none" stroke="#1d9fae" strokeWidth="3" strokeDasharray="2 .8" />
        <path d="M17 33V17L25 31" fill="none" stroke="#0e6470" strokeWidth="2" strokeDasharray="1.5 .8" />
        <path d="M24 33L32 10H38V33H32V22L28 33Z" fill="#22d6ea" />
        <text x="26" y="40.5" fontSize="6.500" textAnchor="middle" fill="#fff">DIGITAL</text>
        <path d="M15 43.5H38" stroke="#aaa" strokeWidth="1" strokeDasharray="1.5 2" />
      </svg>
    </Logo>
    <SliceTitle><T $s={17.5} $w={600} $c={NAVY} $lh={22}>Date</T></SliceTitle>
    <DateBox $mt={8}><T $s={13.6} $c="#0d3f70">11/5/2023</T><Cal /></DateBox>
    <DateBox $mt={7}><T $s={13.6} $c="#0d3f70">10/31/2024</T><Cal /></DateBox>
    <Panel $w={128} $h={137} $mt={21}>
      <PanelHead $h={50} $p="5px 0 0 0" $center>
        <T $s={15.5} $w={600} $c={NAVY} $lh={22}>Customer Type</T>
        <Sub $m="3px 0 0 4px"><T $s={9.8} $c="#7094b8" $lh={16} $ls={0}>Customer_Type</T></Sub>
      </PanelHead>
      <Choices $pt={4} $gap={7}>{['New Custom...', 'Old Customers'].map(n => <Choice key={n} $h={34}><T $s={13.6} $w={600}>{n}</T></Choice>)}</Choices>
    </Panel>
    <Panel $w={128} $h={233} $mt={22}>
      <PanelHead $h={70} $p="6px 0 0 0" $center>
        <T $s={15.5} $w={600} $c={NAVY} $lh={21.5}>Product</T><T $s={15.5} $w={600} $c={NAVY} $lh={21.5}>Category</T>
        <Sub $m="3px 0 0 4px"><T $s={9.8} $c="#7094b8" $lh={16} $ls={0}>category</T></Sub>
      </PanelHead>
      <Choices $pt={4} $gap={6.6}>{['Accessories', 'Electronics', 'Furniture', 'Home & Kitch...'].map(n => <Choice key={n} $h={32}><T $s={13.6} $w={600}>{n}</T></Choice>)}</Choices>
    </Panel>
  </SideCol>
);

const Kpi = ({ name, value, mr, badge }) => (
  <KpiCard $mr={mr}>
    <KpiName><T $s={15.5} $w={600} $c={NAVY}>{name}</T></KpiName>
    <T $s={28.5} $c={BLUE} $lh={39} $ls={-0.01}>{value}</T>
    {badge && <Badge $r={-1} $b={-1}><InfoMark /></Badge>}
  </KpiCard>
);
const catCols = '128px 104px 118px';
const prodCols = '183px 108px 46px';

const Report = () => (
  <ReportPage>
    <SideSlicers />
    <Board>
      <Header>
        <IconSlot $w={501} $t={11}><TitleText>Marketing Overview</TitleText></IconSlot>
        <IconSlot $w={41} $t={22}><T $s={9.5} $c={NAVY} $ls={-0.01}>Select Tab</T></IconSlot>
        <TabBox><TabBtn><T $s={11.3}>General Overview</T></TabBtn><TabBtn $on><T $s={11.3}>Sales</T></TabBtn></TabBox>
      </Header>
      <BoardCols>
        <LeftCol>
          <KpiRow>
            <KpiArea $w={398}>
              <T $s={20.1} $w={600} $c={NAVY} $lh={29}>Average Order Value</T>
              <KpiCards>
                <Kpi name="Total Average" value="2,835 €" mr={12} />
                <Kpi name="MTD Average" value="2,770 €" mr={6} badge />
                <Kpi name="Selected Period" value="2,832 €" />
              </KpiCards>
            </KpiArea>
            <KpiArea $w={133}>
              <T $s={16} $w={600} $c={NAVY} $lh={25} $ls={-0.005}>New Customer</T>
              <T $s={16} $w={600} $c={NAVY} $lh={20}>Sales%</T>
              <NewCard>
                <NewValue><T $s={32.5} $c="#df2b8f" $lh={38}>43.9%</T><T $s={15} $c="#df2b8f" $lh={35}>!</T></NewValue>
                <TargetText>Target: 0.40</TargetText>
                <Badge $r={-15} $b={-7}><InfoMark /></Badge>
              </NewCard>
            </KpiArea>
          </KpiRow>
          <Panel $w={542} $h={214} $mt={7}>
            <PanelHead $h={52} $p="3px 0 0 6px">
              <T $s={20.2} $w={600} $c={NAVY} $lh={27}>Category Sales</T>
              <Small $s={9.8} $c="#7094b8" $lh={20}>Sales and Product_Rank1 by Year, Month and category</Small>
            </PanelHead>
            <Legend $mt={8}>
              <Small $s={9.6} $w={600}>category</Small>
              <Dot $c="#054789" $ml={7} /><Small $s={9.8}>Home & Kitchen</Small><Dot $c="#4478a9" $ml={5} /><Small $s={9.8}>Furniture</Small>
              <Dot $c="#87a7cb" $ml={5} /><Small $s={9.8}>Electronics</Small><Dot $c="#c9d9eb" $ml={5} /><Small $s={9.8}>Accessories</Small>
            </Legend>
            <CategoryChart />
          </Panel>
          <Panel $w={542} $h={188} $mt={9}>
            <PanelHead $h={53} $p="3px 0 0 6px">
              <T $s={20.2} $w={600} $c={NAVY} $lh={27}>Order Frequency</T>
              <Small $s={9.8} $c="#7094b8" $lh={23}>Order Numbers and Total Monthly Average by Year and Month</Small>
            </PanelHead>
            <Legend $mt={7}><Dot $c="#054789" /><Small $s={9.8}>Order Numbers</Small><Dot $c="#4478a9" $ml={5} /><Small $s={9.8}>Total Monthly Average</Small></Legend>
            <OrderChart />
          </Panel>
        </LeftCol>
        <RightCol>
          <Panel $w={360} $h={189}>
            <PanelTitle><T $s={20.2} $w={600} $c={NAVY}>Product Category sales</T></PanelTitle>
            <TableWrap $h={140}>
              <Table>
                <Tr $cols={catCols} $h={33} $kind="head">
                  <Td $head $pt={1}><Cell>category</Cell></Td><Td $head $pt={1}><Cell>TotalSales</Cell></Td>
                  <Td $head $pt={1}><Cell>Sales_Evolution</Cell><SortMark $up /></Td>
                </Tr>
                {categories.map((r, i) => (
                  <Tr key={r[0]} $cols={catCols} $alt={i % 2} $h={i === 3 ? 17 : 22.2}>
                    {r.map((v, j) => <Td key={v} $right={j > 0} $pt={2}><Cell>{v}</Cell></Td>)}
                  </Tr>
                ))}
                <Tr $cols={catCols} $kind="total" $h={23}>
                  <Td><Cell $lh={19}>Total</Cell></Td><Td $right><Cell $lh={19}>33,676,249 €</Cell></Td><Td $right><Cell $lh={19}>129021.77 %</Cell></Td>
                </Tr>
              </Table>
              <VScroll $h={130} />
            </TableWrap>
            <HScroll />
          </Panel>
          <Panel $w={360} $h={331} $mt={14} $bg="#fff">
            <PanelTitle><T $s={20.2} $w={600} $c={NAVY}>Product Sales</T></PanelTitle>
            <TableWrap $h={290}>
              <Table>
                <Tr $cols={prodCols} $h={33} $kind="head">
                  <Td $head><Cell>Product</Cell></Td><Td $head><Cell $lh={21}>Sales</Cell><SortMark /></Td>
                  <Td $head $right><Cell>Rank</Cell></Td>
                </Tr>
                {products.map((r, i) => (
                  <Tr key={r[0]} $cols={prodCols} $alt={i % 2}>
                    {r.map((v, j) => <Td key={v} $right={j > 0} $pt={1}><Cell>{v}</Cell></Td>)}
                  </Tr>
                ))}
              </Table>
              <VScroll $h={64} />
            </TableWrap>
          </Panel>
        </RightCol>
      </BoardCols>
    </Board>
  </ReportPage>
);

const FiltersPane = () => (
  <Filters>
    <FHead>
      <IconSlot $w={31}><S w={21} h={18} s="#102f4c" sw={2}><path d="M1 1H20L12.5 9V17H9V9Z" /></S></IconSlot>
      <T $s={19} $w={600} $lh={26}>Filters</T><Grow />
      <IconSlot $w={38}><S w={17} h={14} s="#102f4c" sw={1.5}><path d="M1 7C3 0 14 0 16 7" /><circle cx="8.5" cy="7" r="2.5" /></S></IconSlot>
      <IconSlot $w={28}><DoubleChevron s="#102f4c" /></IconSlot>
    </FHead>
    <FSearch><Glass s="#12344f" z={19} /><T $s={15.8}>Search</T></FSearch>
    <FLine />
    <FLabel $mt={21}><T $s={14.3}>Filters on this page</T><IconSlot $w={14} $t={13}><Dots w={14} c="#12344f" /></IconSlot></FLabel>
    <FBox $mt={11}><T $s={14.3}>Add data fields here</T></FBox>
    <FLabel $mt={34}><T $s={14.3}>Filters on all pages</T><IconSlot $w={14} $t={13}><Dots w={14} c="#12344f" /></IconSlot></FLabel>
    <FCard><T $s={14.2} $w={700}>transaction_status</T><T $s={14.5}>is Completed</T></FCard>
    <FBox $mt={7}><T $s={14.3}>Add data fields here</T></FBox>
  </Filters>
);

const OpenAiTile = () => <WhiteTile><SiOpenai size={24} /></WhiteTile>;
const slots = [
  { n: 'view', i: <svg width="30" height="30"><rect x="0" y="9" width="23" height="20" fill="#7a7876" /><rect x="7" y="1" width="23" height="20" fill="#f2f2f2" /><rect x="7" y="9" width="16" height="12" fill="#b8b6b4" /></svg> },
  { n: 'code', d: 1, i: <svg width="30" height="30" viewBox="0 0 30 30"><path d="M0 18L20 1L22 7L3 20.500Z" fill="#1784d8" /><path d="M0 12L3 9.500L22 23L21 29Z" fill="#1f9cf0" /><path d="M22 0L30 4V26L22 30L20 29L22 24V6L20 1Z" fill="#2ba6f5" /></svg> },
  { n: 'copilot', i: <IconSlot $w={28} $t={2}><Copilot z={28} id="t" /></IconSlot> },
  { n: 'files', d: 1, i: <svg width="30" height="30"><path d="M0 4Q0 2 2 2H10L14 6H28Q30 6 30 8V12H0Z" fill="#e0a010" /><path d="M0 9H12L15 6H28Q30 6 30 9V26Q30 28 28 28H2Q0 28 0 26Z" fill="#fdd04c" /><path d="M5 28V23Q5 20 8 20H22Q25 20 25 23V28Z" fill="#1a7fd4" /><path d="M9 24H21" stroke="#0b4f9a" strokeWidth="2" /></svg> },
  { n: 'edge', d: 1, i: <svg width="30" height="30" viewBox="0 0 30 30"><defs><linearGradient id="eg" x1="0" y1="0" x2="1" y2=".5"><stop offset="0" stopColor="#2aa5e8" /><stop offset=".6" stopColor="#35c6b0" /><stop offset="1" stopColor="#6fdc62" /></linearGradient></defs><circle cx="15" cy="15" r="15" fill="#1668b8" /><path d="M0 14C1 5 8 0 15 0C24 0 30 6 30 12C30 17 26 20 21 19C17 18 19 16 19 14C18 9 5 6 0 14Z" fill="url(#eg)" /><path d="M13 13C10 20 16 27 26 24C20 29 8 28 8 19C8 15 10 13 13 13Z" fill="#0d4d9c" /><path d="M17 13C20 16 17 19 19 20.5C22 22 27 21 29 18L27 23C20 27 13 22 13 17C13 14 15 12 17 13Z" fill="#1c2629" /></svg> },
  { n: 'l', i: <LetterTile $bg="#1f3fb5"><T $s={22} $w={700}>L</T></LetterTile> },
  { n: 'in', d: 1, i: <LetterTile $bg="#0a7ab8" $r={4}><T $s={24} $w={700} $lh={26}>in</T></LetterTile> },
  { n: 'gpt1', i: <OpenAiTile /> },
  { n: 'gpt2', d: 1, i: <><OpenAiTile /><Avatar /></> },
  { n: 'gpt3', i: <OpenAiTile /> },
  { n: 'whale', i: <svg width="30" height="30" viewBox="0 0 30 30"><path d="M1 12C2 7 8 6 13 8C16 9 18 11 20 10C18 7 20 5 19 4C22 4 22 7 24 7C26 6 28 5 29 6C29 10 26 12 25 13C25 18 22 21 20 22L23 25C19 26 17 24 16 24C8 26 0 20 1 12Z" fill="#4d6bfe" /><path d="M4 13C8 11 12 17 15 20C10 23 4 18 4 13ZM13 13C17 12 20 15 20 19L16 17Z" fill="#292619" /><circle cx="17" cy="15" r="1.2" fill="#4d6bfe" /></svg> },
  { n: 'in2', d: 1, i: <><IconSlot $w={26} $t={2}><LetterSmall>in</LetterSmall></IconSlot><Count $l={28} $w={22}>18</Count></> },
  { n: 'wa', d: 1, i: <><FaWhatsapp size={31} color="#25d366" /><Count $l={26} $w={25}>23</Count></> },
  { n: 'media', d: 1, i: <svg width="30" height="30" viewBox="0 0 30 30"><defs><linearGradient id="mg" x1="0" y1="0" x2="1" y2="1"><stop offset="0" stopColor="#ff9340" /><stop offset="1" stopColor="#8f5bd8" /></linearGradient></defs><circle cx="15" cy="15" r="13.7" fill="#2f2f3c" stroke="url(#mg)" strokeWidth="2.4" /><path d="M11 9L21 15L11 21Z" fill="#fff" /></svg> },
  { n: 'pbi', d: 2, i: <><Active /><Front><svg width="24" height="30"><rect x="14" y="0" width="10" height="30" rx="1" fill="#e0a30c" /><rect x="7" y="7" width="10" height="23" rx="1" fill="#f2c230" /><rect x="0" y="15" width="10" height="15" rx="1" fill="#fde07a" /></svg></Front></> },
  { n: 'chrome', d: 1, i: <><svg width="30" height="30" viewBox="0 0 30 30"><circle cx="15" cy="15" r="15" fill="#e33b2e" /><path d="M15 15L2 7.5A15 15 0 0 0 13 30Z" fill="#2da94f" /><path d="M15 15L30 10A15 15 0 0 1 12.5 29.8L20 18Z" fill="#fdc60a" /><circle cx="15" cy="15" r="7.2" fill="#fff" /><circle cx="15" cy="15" r="5.5" fill="#4285f4" /></svg><Avatar /></> },
  { n: 'photos', d: 1, i: <IconSlot $w={26} $t={2}><svg width="26" height="26"><rect width="26" height="26" rx="2" fill="#1a62c4" /><path d="M0 24L12 9L26 26H2Q0 26 0 24Z" fill="#35c1f1" /><path d="M14 12L26 26H20L10 14Z" fill="#1390df" /><circle cx="20" cy="5" r="2.3" fill="#fff" /></svg></IconSlot> },
];

const TaskbarView = () => (
  <Taskbar>
    <Weather>
      <svg width="36" height="38" viewBox="0 0 36 38">
        <path d="M2 24H28A13 13 0 0 1 15 36A13 13 0 0 1 5 30Z" fill="#f5941f" /><path d="M15 17H28V26H12Z" fill="#f7a52e" />
        <path d="M6 14H11M7 19H20M1 24.5H16M2 29.5H24" stroke="#8d8d8d" strokeWidth="3" strokeLinecap="round" />
        <circle cx="23" cy="10" r="10" fill="#ff99a4" /><text x="23" y="15" fontSize="13.5" fill="#111" textAnchor="middle">3</text>
      </svg>
    </Weather>
    <Start>
      <svg width="29" height="29"><defs><linearGradient id="wg" x1="0" y1="0" x2="1" y2="1"><stop offset="0" stopColor="#8fe6ff" /><stop offset="1" stopColor="#1290f0" /></linearGradient></defs><path d="M0 0H14V14H0ZM15 0H29V14H15ZM0 15H14V29H0ZM15 15H29V29H15Z" fill="url(#wg)" /></svg>
    </Start>
    <TSearch>
      <GlassR s="#eee" z={19} sw={2} /><T $s={17} $lh={24}>Search</T><Grow />
      <svg width="61" height="32" viewBox="0 0 61 32">
        <path d="M2 12C4 6 10 8 12 2H54C58 4 56 8 60 12V20H2Z" fill="#4cc3ea" /><path d="M0 17C12 13 45 12 60 16C61 26 56 31 46 31H16C6 31 0 26 0 17Z" fill="#ecd9b4" />
        <path d="M23 8L27 5H42V26L35 28L23 26Z" fill="#b5702f" /><path d="M36 5H43V27L36 28Z" fill="#d99a52" /><path d="M37 6V27M40 6V27" stroke="#b8793a" strokeWidth=".8" />
        <path d="M22 9L25 4H36L35 9Z" fill="#e2574c" /><path d="M26.500 4L25 9M30 4L29.500 9M33.500 4L33 9" stroke="#fff" strokeWidth="1" /><path d="M27 13H33V25H27Z" fill="#7b4520" />
        <path d="M6 26C8 16 6 12 7 8M9 26C10 18 12 12 14 6M12 26C13 20 15 16 18 12" stroke="#d6a64a" strokeWidth="1.5" fill="none" /><path d="M8 27L4 19M10 27L11 17M12 27L17 19M52 25L47 19M52 25L52 16M52 25L57 19" stroke="#6c9a2e" strokeWidth="2" fill="none" />
      </svg>
    </TSearch>
    {slots.map(s => <Slot key={s.n}>{s.i}{s.d && <Ind $on={s.d === 2} />}</Slot>)}
    <Tray>
      <IconSlot $w={37}><Chevron w={13} dir="up" c="#fff" sw={1.2} /></IconSlot>
      <IconSlot $w={40}><svg width="21" height="20"><path d="M4 16A5 5 0 0 1 3 7C4 1 12 0 14 5C18 6 18 10 16 16Z" fill="#b5b3b1" /><circle cx="14" cy="13.5" r="6" fill="#d92c2c" /><path d="M12 11.5L16 15.5M16 11.5L12 15.5" stroke="#fff" strokeWidth="1.3" /></svg></IconSlot>
      <IconSlot $w={30}><S w={20} h={16} s="#fff" sw={1.6}><path d="M1 5C6 0 14 0 19 5M4 8.5C7.5 5 12.5 5 16 8.5M7 12C9 10 11 10 13 12" /><circle cx="10" cy="14" r="1" fill="#fff" /></S></IconSlot>
      <IconSlot $w={30}><S w={20} h={16} s="#fff" sw={1.3}><path d="M1 5.5H4L9 1V15L4 10.5H1ZM11.5 5.5C13 7 13 9 11.5 10.5M14 3.5C17 6 17 10 14 12.5M16.5 1.5C21 5 21 11 16.5 14.5" /></S></IconSlot>
      <S w={20} h={14} s="#fff" sw={1.5}><rect x="1" y="1" width="16" height="12" rx="3" /><path d="M19 5V9" /><rect x="3" y="3.5" width="4" height="7" fill="#fff" stroke="none" /></S>
      <Clock><T $s={14.6}>10:06 PM</T><T $s={14.6}>23/04/2025</T></Clock>
    </Tray>
  </Taskbar>
);

export default function App() {
  return (
    <Screen>
      <Global />
      <Top />
      <RibbonBar />
      <Work>
        <Rail>
          <RailItem $h={50} $pl={13} $on><S w={19} h={19} s="#222"><path d="M1 0V18H19M4 6H7V15H4ZM9 9H12V15H9ZM14 2H17V15H14Z" /></S></RailItem>
          <RailItem $h={48} $pl={12}><S w={21} h={20} s="#75736f"><path d="M1 1H20V19H1ZM1 5H20M1 10H20M1 14.5H20M7 5V19M13.5 5V19" /></S></RailItem>
          <RailItem $h={52} $pl={11}><S w={24} h={24} s="#75736f"><path d="M1 7H10V16H1ZM13 1H23V10H13ZM13 14H23V23H13ZM1 10H10M13 4H23M13 17H23M10 10H13M5 7V4H13M5 16V20H13" /></S></RailItem>
          <RailItem $h={50} $pl={10}><S w={23} h={22} s="#75736f"><path d="M6 12V1H13L18 6V15M13 1V6H18M21 6V17L17 20" /><text x="-1" y="20" fontSize="9" fontWeight="600" fill="#75736f" stroke="none">DAX</text></S></RailItem>
        </Rail>
        <Middle>
          <Upper><Canvas><Report /></Canvas><FiltersPane /></Upper>
          <PageTabs>
            <ViewModes>
              <ModeOn><S w={25} h={18}><path d="M1 1H24V14H1ZM12.5 14V17M8 17.3H17" /></S></ModeOn>
              <ModeOff><S w={17} h={25} sw={1.6}><rect x="1" y="1" width="15" height="23" rx="2" /><path d="M7.5 20.5H9.5" /></S></ModeOff>
              <Arrows><svg width="6" height="11"><path d="M6 0V11L0 5.5Z" fill="#c2c0be" /></svg><svg width="6" height="11"><path d="M0 0V11L6 5.5Z" fill="#c2c0be" /></svg></Arrows>
            </ViewModes>
            <PTab $w={167}><T $s={14.6}>General Overview</T></PTab>
            <PTab $w={85} $on><T $s={14.3} $w={600}>Sales</T><CloseX>x</CloseX></PTab>
            <AddPage><S w={13} h={13} s="#fff" sw={3.2}><path d="M6.5 0V13M0 6.5H13" /></S></AddPage>
          </PageTabs>
        </Middle>
        <Pane>
          <PHead><T $s={19} $w={600} $lh={26}>Build</T><Grow /><Dots /><DoubleChevron /></PHead>
          <PLabel $mt={-1}><T $s={14.5}>Suggestions</T></PLabel>
          <VizBox>{viz.map((v, i) => <S key={i}>{v}</S>)}</VizBox>
          <PLabel $mt={11}><T $s={14.5}>Data</T></PLabel>
          <DropZone><AddData><T $s={14.8} $w={600}>+Add data</T></AddData></DropZone>
        </Pane>
        <Pane>
          <PHead><T $s={19} $w={600} $lh={26}>Data</T><Grow /><Dots /><DoubleChevron /></PHead>
          <DSearch><GlassR s="#555" z={18} sw={1.3} /><T $s={16.8}>Search</T></DSearch>
          {tables.map((t, i) => (
            <DRow key={t}>
              <IconSlot $w={17}><S w={8} h={15} sw={1.2}><path d="M1 1L7 7.5L1 14" /></S></IconSlot>
              <IconSlot $w={22}>{i ? <GridIcon /> : <MeasureIcon />}</IconSlot>
              <T $s={14.4} $c="#3b3a39">{t}</T>
            </DRow>
          ))}
        </Pane>
        <Strip>
          <StripTop>
            <StripBtn $on><Cyl w={19} h={23} /></StripBtn>
            <StripBtn $on><BuildIcon z={24} /></StripBtn>
            <StripBtn><FormatIcon z={24} /></StripBtn>
            <StripBtn><Copilot z={23} id="s" /></StripBtn>
            <StripBtn><S w={22} h={22} s="#111" sw={1.7}><path d="M11 0V22M0 11H22" /></S></StripBtn>
          </StripTop>
          <StripGear>
            <S w={25} h={24} vb="0 0 25 24" s="#3b3a39" sw={1.5}><circle cx="12.5" cy="12" r="4" /><path d="M10 1H15L16 4.5L19 6L22.5 5L25 9.5L22 12L25 15L22.5 19L19 18L16 19.5L15 23H10L9 19.5L6 18L2.5 19L0 15L3 12L0 9.5L2.5 5L6 6L9 4.5Z" strokeLinejoin="round" /></S>
          </StripGear>
        </Strip>
      </Work>
      <Status>
        <T $s={14.3}>Page 2 of 2</T><Grow />
        <ZoomBar>
          <S w={6} h={6} sw={2}><path d="M0 3H6" /></S>
          <S w={125} h={13} s="#605e5c" sw={1.5}><path d="M0 6.5H125" /><path d="M63.5 3V10" /><path d="M41.5 0V13" strokeWidth="5" /></S>
          <S w={10} h={10} sw={1.8}><path d="M5 0V10M0 5H10" /></S>
          <Percent><T $s={14.3}>69%</T></Percent>
          <S w={21} h={16} s="#605e5c"><rect x="1" y="1" width="19" height="14" /><path d="M4 6V4H7M14 4H17V6M17 10V12H14M7 12H4V10" stroke="#3a86c8" /></S>
        </ZoomBar>
      </Status>
      <TaskbarView />
    </Screen>
  );
}
